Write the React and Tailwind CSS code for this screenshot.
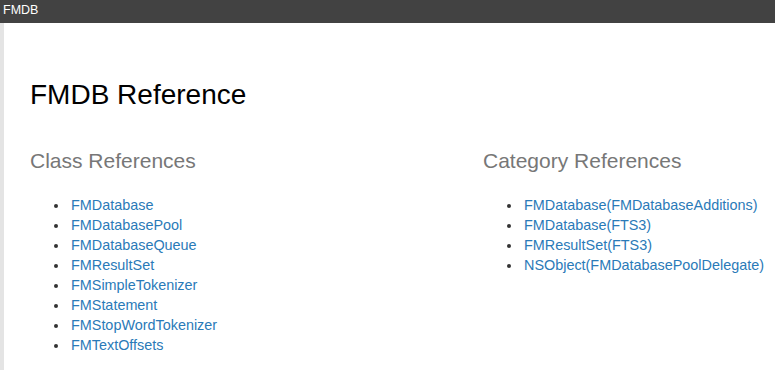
import React from 'react';

const classes = [
  'FMDatabase',
  'FMDatabasePool',
  'FMDatabaseQueue',
  'FMResultSet',
  'FMSimpleTokenizer',
  'FMStatement',
  'FMStopWordTokenizer',
  'FMTextOffsets',
];

const categories = [
  'FMDatabase(FMDatabaseAdditions)',
  'FMDatabase(FTS3)',
  'FMResultSet(FTS3)',
  'NSObject(FMDatabasePoolDelegate)',
];

function RefList({ title, items }) {
  return (
    <div className="flex-1">
      <h2 className="text-[21px] leading-[24px] text-[#777777]">{title}</h2>
      <ul className="mt-[22px] pl-[39px] list-disc text-[14.4px] leading-[20px] marker:text-[#333333]">
        {items.map((item) => (
          <li key={item} className="pl-[2px]">
            <a href="#" className="text-[#2a7ab8]">{item}</a>
          </li>
        ))}
      </ul>
    </div>
  );
}

export default function App() {
  return (
    <div className="w-[775px] h-[370px] overflow-hidden bg-white" style={{ fontFamily: '"Liberation Sans", Arial, sans-serif' }}>
      <div className="h-[23px] bg-[#424242] text-white text-[12.5px] leading-[20px] pl-[3px]">FMDB</div>
      <div className="h-[347px] border-l-4 border-[#e4e4e4] pl-[26px] pt-[56px]">
        <h1 className="text-[28px] leading-[32px] text-black">FMDB Reference</h1>
        <div className="flex mt-[38px] w-[906px]">
          <RefList title="Class References" items={classes} />
          <RefList title="Category References" items={categories} />
        </div>
      </div>
    </div>
  );
}
